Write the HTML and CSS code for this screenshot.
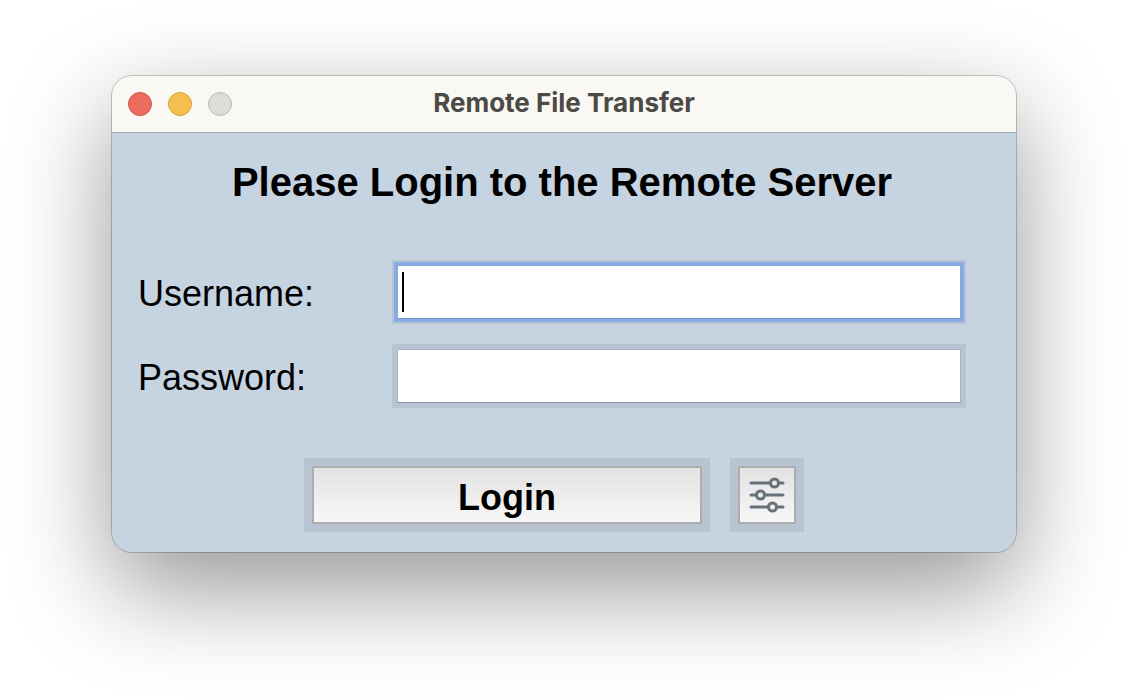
FILE: index.html
```html
<!DOCTYPE html>
<html lang="en">
<head>
<meta charset="utf-8">
<title>Remote File Transfer</title>
<link rel="stylesheet" href="styles.css">
</head>
<body>
<main class="window">
  <header class="titlebar">
    <div class="lights">
      <button class="light close" type="button" aria-label="Close"></button>
      <button class="light minimize" type="button" aria-label="Minimize"></button>
      <button class="light zoom" type="button" aria-label="Zoom" disabled></button>
    </div>
    <div class="window-title">Remote File Transfer</div>
  </header>
  <form class="login">
    <h1 class="heading">Please Login to the Remote Server</h1>
    <div class="fields">
      <label class="label" for="username">Username:</label>
      <div class="field focused">
        <input class="input" id="username" type="text">
        <span class="caret"></span>
      </div>
      <label class="label" for="password">Password:</label>
      <div class="field">
        <input class="input" id="password" type="password">
      </div>
    </div>
    <div class="actions">
      <div class="button-frame wide"><button class="button" type="button">Login</button></div>
      <div class="button-frame">
        <button class="button square" type="button" aria-label="Settings">
          <svg class="icon" viewBox="0 0 38 38" width="38" height="38" fill="none" stroke="#667278" stroke-width="3" stroke-linecap="round" aria-hidden="true">
            <path d="M3 7H22M31 7H35M3 19H8M17 19H35M3 31H20M29 31H35"/>
            <circle cx="26.500" cy="7" r="4"/>
            <circle cx="12.500" cy="19" r="4"/>
            <circle cx="24.500" cy="31" r="4"/>
          </svg>
        </button>
      </div>
    </div>
  </form>
</main>
</body>
</html>
```
FILE: styles.css
```css
* {
  box-sizing: border-box;
}

body {
  min-height: 100vh;
  margin: 0;
  padding: 76px 112px;
  background: #fff;
  color: #000;
  font-family: "Liberation Sans", Arial, sans-serif;
}

.window {
  border-radius: 20px;
  background: #c6d3e1;
  box-shadow: 0 0 0 1px rgba(0, 0, 0, 0.2), 0 36px 100px rgba(0, 0, 0, 0.42);
}

.titlebar {
  display: grid;
  grid-template-columns: 1fr auto 1fr;
  align-items: center;
  height: 57px;
  border-bottom: 1px solid #9dabb9;
  border-radius: 20px 20px 0 0;
  padding: 0 16px;
  background: #faf8f2;
}

.lights {
  display: flex;
  gap: 16px;
}

.light {
  width: 24px;
  height: 24px;
  padding: 0;
  border: 1px solid;
  border-radius: 50%;
}

.close {
  border-color: #d05549;
  background: #ed6a5e;
}

.minimize {
  border-color: #d8a13c;
  background: #f5bf4f;
}

.zoom {
  border-color: #bdbcb6;
  background: #dedcd6;
}

.window-title {
  padding-bottom: 2px;
  color: #4b4a47;
  font: 700 26px/32px Inter, sans-serif;
}

.login {
  padding: 25px 50px 20px 26px;
}

.heading {
  margin: 0 0 54px;
  padding-left: 20px;
  font-size: 40px;
  line-height: 48px;
  text-align: center;
}

.fields {
  display: grid;
  grid-template-columns: 254px 1fr;
  align-items: center;
  row-gap: 20px;
}

.label {
  padding-top: 4px;
  font-size: 36px;
  line-height: 40px;
}

.field {
  position: relative;
  padding: 5px;
  background: #b9c4d2;
}

.input {
  display: block;
  width: 100%;
  height: 54px;
  padding: 0 6px;
  border: 1px solid #a9b4c0;
  border-bottom-color: #8b95a1;
  border-radius: 0;
  outline: none;
  background: #fff;
  font: 36px/40px "Liberation Sans", Arial, sans-serif;
}

.focused .input {
  border-color: #84a6d8;
  border-bottom-color: #6c93cc;
  box-shadow: 0 0 0 3px #87ace2;
}

.caret {
  position: absolute;
  top: 12px;
  left: 10px;
  width: 2px;
  height: 40px;
  background: #000;
}

.actions {
  display: flex;
  justify-content: center;
  gap: 20px;
  margin-top: 50px;
  padding-left: 4px;
}

.button-frame {
  padding: 8px;
  background: #b9c4d2;
}

.wide {
  width: 406px;
}

.button {
  display: flex;
  align-items: center;
  justify-content: center;
  width: 100%;
  height: 58px;
  padding: 6px 0 0;
  border: 2px solid #adadad;
  background: linear-gradient(#e2e2e2, #f7f7f7);
  color: #000;
  font: bold 36px/40px "Liberation Sans", Arial, sans-serif;
}

.square {
  width: 58px;
  padding: 0;
}
```
